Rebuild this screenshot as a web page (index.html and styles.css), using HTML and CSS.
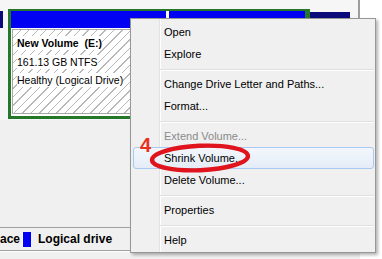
FILE: index.html
```html
<!DOCTYPE html>
<html lang="en">
<head>
  <meta charset="UTF-8">
  <title>Disk Management</title>
  <link rel="stylesheet" href="styles.css">
</head>
<body>
  <div class="main">
    <div class="disk-row">
      <div class="stub"></div>
      <div class="extended">
        <div class="part first">
          <div class="part-head"></div>
          <div class="part-body">
            <div class="hatch">
              <span class="name">New Volume&nbsp; (E:)</span>
              <span>161.13 GB NTFS</span>
              <span>Healthy (Logical Drive)</span>
            </div>
          </div>
        </div>
        <div class="part second">
          <div class="part-head"></div>
          <div class="part-body"></div>
        </div>
      </div>
      <div class="primary"></div>
    </div>

    <div class="legend">
      <span class="legend-text">ace</span>
      <span class="swatch"></span>
      <span class="legend-text">Logical drive</span>
    </div>
  </div>

  <ul class="menu">
    <li>Open</li>
    <li>Explore</li>
    <li class="sep"></li>
    <li>Change Drive Letter and Paths...</li>
    <li>Format...</li>
    <li class="sep"></li>
    <li class="disabled">Extend Volume...</li>
    <li class="hot">Shrink Volume...</li>
    <li>Delete Volume...</li>
    <li class="sep"></li>
    <li>Properties</li>
    <li class="sep"></li>
    <li>Help</li>
  </ul>

  <!-- step marker -->
  <div class="step">4</div>
  <svg class="ring" width="108" height="36" viewBox="0 0 108 36">
    <ellipse cx="53" cy="17" rx="48" ry="12.2" transform="rotate(-2.5 53 17)" fill="none" stroke="#e0141c" stroke-width="4.4"/>
  </svg>
</body>
</html>
```

FILE: styles.css
```css
body { margin:0; width:382px; height:259px; overflow:hidden; position:relative; background:#fff; font-family:"Liberation Sans", Arial, sans-serif; }
.main { width:360px; height:259px; background:#f0f0f0; }

.disk-row { display:flex; align-items:flex-start; box-sizing:border-box; width:360px; height:120px; padding-top:9px; border-right:2px solid #9d9d9d; background:#f6f6f6; }
.stub { width:3px; height:17px; margin:2px 5px 0 0; background:#0a0a7a; }
.extended { display:flex; gap:3px; box-sizing:border-box; width:302px; height:110px; border:3px solid #25782a; border-top-width:2px; border-right-width:5px; background:#fff; }
.part { display:flex; flex-direction:column; }
.part.first { width:155px; }
.part.second { flex:1; }
.part-head { height:17px; background:#0000f2; }
.part-body { flex:1; display:flex; padding:1px 1px 2px 1px; }
.hatch { flex:1; border:1px solid #a8a8a8; padding:6px 4px 0; background:repeating-linear-gradient(135deg, #fff 0 5px, #b8b8b8 5px 6px); font-size:10.5px; }
.hatch span { display:block; width:fit-content; line-height:14px; margin-bottom:4.5px; background:#fff; color:#000; }
.hatch .name { font-weight:bold; }
.primary { width:40px; height:16px; margin-top:3px; background:#0a0a7a; }

.legend { display:flex; align-items:center; box-sizing:border-box; height:24px; margin-top:107px; border-top:1px solid #a0a0a0; border-bottom:1px solid #a0a0a0; box-shadow:0 1px #fff; font-size:12px; font-weight:bold; }
.legend-text { white-space:nowrap; }
.swatch { width:8px; height:15px; margin:0 7px 0 2px; background:#0000f2; border-left:1px solid #fff; }

.menu { position:absolute; left:130px; top:18px; width:246px; box-sizing:border-box; margin:0; padding:2px 1px 1px 2px; list-style:none; border:1px solid #979797; box-shadow:2px 2px 3px rgba(0,0,0,.3); background:linear-gradient(to right, #f0f0f0 28px, #e2e3e3 28px 29px, #fff 29px 30px, #f0f0f0 30px); font-size:11px; color:#000; }
.menu li { height:22px; box-sizing:border-box; line-height:20px; padding-left:30px; border:1px solid transparent; }
.menu li.sep { height:8px; margin-left:27px; padding:0; border:none; background:linear-gradient(#0000 4px, #e0e0e0 4px 5px, #fff 5px 6px, #0000 6px); }
.menu li.disabled { color:#8a8a8a; }
.menu li.hot { border-color:#a8caf0; border-radius:3px; background:linear-gradient(#f3f7fc, #e4ecf7); }

.step { position:absolute; left:140px; top:135px; font-size:20px; line-height:20px; font-weight:bold; color:#e8321e; }
.ring { position:absolute; left:147px; top:141px; }
```
